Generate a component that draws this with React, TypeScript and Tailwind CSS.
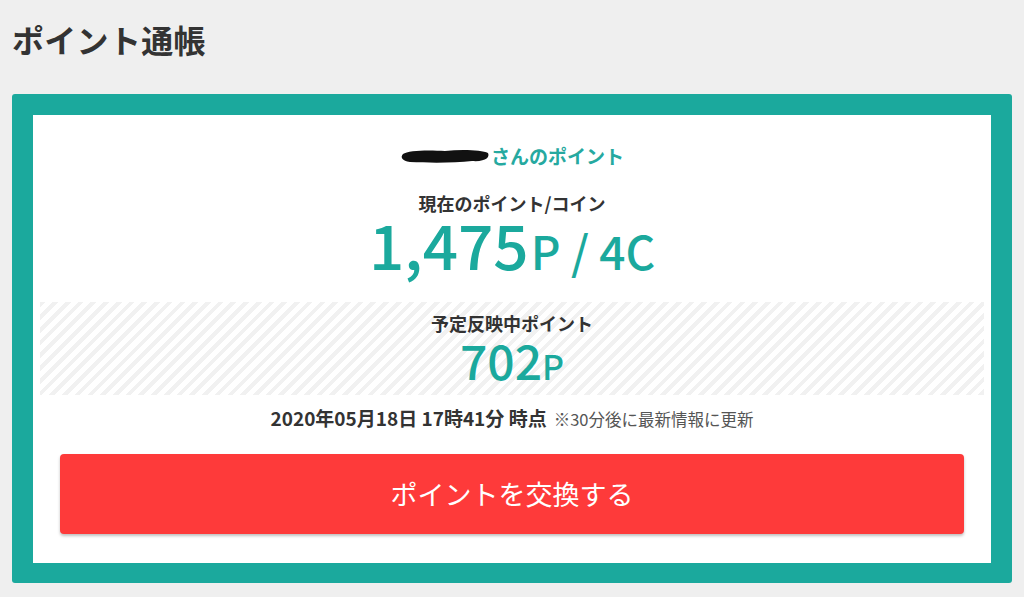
import React from "react";

const jp = "font-['Noto_Sans_CJK_JP','Noto_Sans',sans-serif]";

export default function App() {
  return (
    <div className={`w-[1024px] h-[597px] bg-[#efefef] overflow-hidden ${jp}`}>
      <div className="pl-[12px] pt-[17px] h-[94px]">
        <h1 className="text-[32px] leading-[44px] font-bold text-[#333333] tracking-[0.3px]">ポイント通帳</h1>
      </div>
      <div className="mx-[12px] w-[1000px] h-[489px] bg-[#1ba99d] rounded-[3px] p-[21px] pb-[20px]">
        <div className="bg-white h-full flex flex-col items-center">
          <div className="mt-[28px] h-[26px] flex items-center">
            <svg width="90" height="20" viewBox="0 0 90 20" className="mr-[1px]">
              <path d="M3 8 C 8 4, 30 4, 45 5 C 62 3, 82 4, 88 7 C 90 11, 86 16, 72 15 C 55 17, 30 17, 10 16 C 2 15, 0 11, 3 8 Z" fill="#111" />
            </svg>
            <span className="text-[19px] font-bold text-[#26a9a0]">さんのポイント</span>
          </div>
          <div className="mt-[21px] text-[18px] font-bold text-[#333333] leading-[26px]">現在のポイント/コイン</div>
          <div className="flex items-baseline text-[#1ba99d] font-medium leading-[54px]">
            <span className="text-[62px]">1,475</span>
            <span className="text-[46px] ml-[2px]">P / 4C</span>
          </div>
          <div className="mt-[25px] self-stretch mx-[7px] h-[93px] bg-[repeating-linear-gradient(135deg,#f1f1f1_0px,#f1f1f1_4px,#ffffff_4px,#ffffff_9px)] flex flex-col items-center">
            <div className="mt-[8px] text-[18px] font-bold text-[#333333] leading-[26px]">予定反映中ポイント</div>
            <div className="flex items-baseline text-[#1ba99d] font-medium leading-[46px]">
              <span className="text-[48px]">702</span>
              <span className="text-[34px]">P</span>
            </div>
          </div>
          <div className="mt-[10px] flex items-baseline text-[#333333] leading-[26px]">
            <span className="text-[19px] font-bold">2020年05月18日 17時41分 時点</span>
            <span className="ml-[7px] text-[16.5px] text-[#555555]">※30分後に最新情報に更新</span>
          </div>
          <button className="mt-[22px] w-[904px] h-[80px] bg-[#fe3a3a] rounded-[4px] shadow-[0_2px_3px_rgba(0,0,0,0.25)] text-white text-[27px] flex items-center justify-center">
            ポイントを交換する
          </button>
        </div>
      </div>
    </div>
  );
}
